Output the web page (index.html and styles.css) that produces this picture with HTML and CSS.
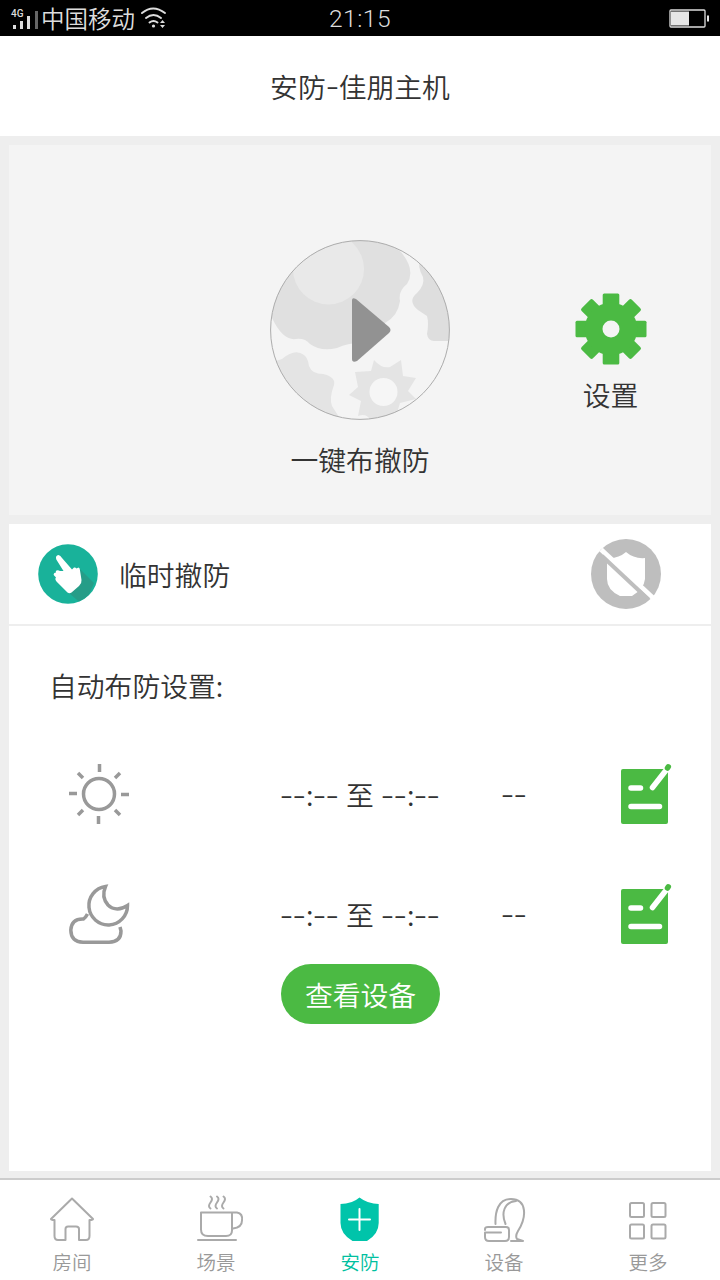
FILE: index.html
```html
<!DOCTYPE html>
<html lang="zh-CN">
<head>
<meta charset="utf-8">
<title>安防-佳朋主机</title>
<link rel="stylesheet" href="styles.css">
</head>
<body>
<div class="app">
  <div class="status">
    <div class="status-left">
      <svg class="signal" width="30" height="22" viewBox="0 0 30 22"><g fill="#ddd"><path d="M2 13h3v4H2zM9 9h3v8H9zM16 4h3v13h-3z"/><path d="M24 -1h3v18h-3z" fill="#666"/></g></svg>
      <span class="net">4G</span>
      <span class="carrier">中国移动</span>
      <svg width="26" height="22" viewBox="0 0 26 22" fill="none" stroke="#ddd" stroke-width="2" stroke-linecap="round"><path d="M1 5Q12-4 24 5M5 10Q12.500 4 20 10M8.500 14.500Q12.500 11.500 16.500 14.500"/><circle cx="12.500" cy="18" r="1.600" fill="#ddd" stroke="none"/><path d="M19 15l2.500-3 2.500 3zM19 17l2.500 3 2.500-3z" fill="#ddd" stroke="none"/></svg>
    </div>
    <span class="clock">21:15</span>
    <svg class="battery" width="41" height="20" viewBox="0 0 41 20"><rect x="2" y="1" width="35" height="17" rx="1" fill="none" stroke="#ddd" stroke-width="1.300"/><path d="M3 2.500h18v14H3zM39 6.500h2v6h-2z" fill="#e6e6e6"/></svg>
  </div>
  <header class="header">安防<span class="hyphen">-</span>佳朋主机</header>
  <main class="content">
    <section class="hero">
      <div class="toggle">
        <svg width="180" height="180" viewBox="0 0 180 180">
          <defs><clipPath id="disc"><circle cx="90" cy="90" r="89.500"/></clipPath></defs>
          <g clip-path="url(#disc)">
            <rect width="180" height="180" fill="#f4f4f4"/>
            <path d="M0 0H115L131 12Q146 30 137 44Q128 51 130 61Q128 76 115 83L90 103Q78 103 67 108Q51 112 40 104Q35 98 26 99Q13 101 2 78Z" fill="#e0e0e0"/>
            <circle cx="58.500" cy="29" r="35.500" fill="#e9e9e9"/>
            <path d="M180 20H150Q147 26 153 37Q155 45 147 53Q137 61 148 70L157 76Q159 83 157 94Q158 101 164 101H180Z" fill="#dedede"/>
            <path d="M0 123L12 119Q25 108 34 115Q38 118 39 126Q42 134 53 134Q66 137 64 145Q59 158 62 166L71 180H0Z" fill="#e4e4e4"/>
            <path d="M104 120Q112 129 120 127L131 120L133 136L146 138L138 151L146 159L130 163L125 180H100Q97 173 88 176L91 161L79 155L88 147L85 132L101 131Z" fill="#e4e4e4"/>
            <circle cx="113.500" cy="152" r="14" fill="#f6f6f6"/>
          </g>
          <circle cx="90" cy="90" r="89.400" fill="none" stroke="#acacac"/>
          <path d="M82 60Q82 57 86 59L119 87Q122 90 119 93L87 121Q82 123 82 119Z" fill="#929292"/>
        </svg>
        <span class="caption">一键布撤防</span>
      </div>
      <div class="settings">
        <svg width="72" height="72" viewBox="0 0 72 72" fill="#4bba43">
          <defs><path id="tooth" d="M27.700 15V2Q27.700 .500 29.200 .500H42.800Q44.300 .500 44.300 2V15Z"/><path id="corner" d="M28 15V2.500Q28 .500 30 .500H42Q44 .500 44 2.500V15Z"/></defs>
          <use href="#tooth"/><use href="#corner" transform="rotate(45 36 36)"/><use href="#tooth" transform="rotate(90 36 36)"/><use href="#corner" transform="rotate(135 36 36)"/><use href="#tooth" transform="rotate(180 36 36)"/><use href="#corner" transform="rotate(225 36 36)"/><use href="#tooth" transform="rotate(270 36 36)"/><use href="#corner" transform="rotate(315 36 36)"/>
          <circle cx="36" cy="36" r="26.300"/><circle cx="36" cy="36" r="8.500" fill="#f4f4f4"/>
        </svg>
        <span>设置</span>
      </div>
    </section>
    <section class="panel">
      <div class="disarm">
        <svg width="60" height="60" viewBox="0 0 60 60">
          <defs><clipPath id="hand"><circle cx="30" cy="30" r="29.500"/></clipPath></defs>
          <circle cx="30" cy="30" r="29.800" fill="#19b29a"/>
          <path d="M42 25L56 39L46 62L31 49L43 36Z" fill="#269d88" clip-path="url(#hand)"/>
          <path d="M18.300 15.500Q17 11.500 20.500 11Q22.500 11.500 24 14L34 25.500L36 23.500Q37.500 23 38.500 24.500L40.500 23.500Q42 24 42 26.500L43.500 36Q44 39 41 42L33.500 48.500Q31.500 50 29.500 48.500L18.500 37.500Q16.500 35 18 33.500L15.700 31Q15.500 28.500 18 28.500L17.800 27Q19.500 25.500 22 27L25.500 27Z" fill="#fff"/>
        </svg>
        <span class="disarm-label">临时撤防</span>
        <svg width="72" height="72" viewBox="0 0 72 72"><circle cx="36" cy="36" r="35" fill="#bebebe"/><path d="M17 20Q28 21 36 14Q44 21 55 20V41Q54 51 42 58H30Q17 52 17 41Z" fill="#fff"/><path d="M11 11.500L63 60" stroke="#fff" stroke-width="5"/><path d="M12 18L58.500 61.500" stroke="#bebebe" stroke-width="4"/></svg>
      </div>
      <div class="schedule">
        <h2 class="heading">自动布防设置:</h2>
        <div class="row">
          <svg width="60" height="60" viewBox="0 0 60 60" fill="none" stroke="#999" stroke-width="3.500"><circle cx="30" cy="30" r="15.500"/><path d="M30.500 0v8M29.500 52v8M0 29.500h8M52 30.500h8M9 9l5 5M51 9l-5 5M9 51l5-5M51 51l-5-5"/></svg>
          <div class="time"><span class="dashes">--</span><span class="colon">:</span><span class="dashes">--</span><span class="to">至</span><span class="dashes">--</span><span class="colon">:</span><span class="dashes">--</span></div>
          <div class="days"><span class="dashes">--</span></div>
          <svg class="edit" width="52" height="60" viewBox="0 0 52 60"><rect x="1" y="5" width="47" height="55" rx="2" fill="#4bba43"/><path d="M11 24h9.500M11 42.500h28.500" stroke="#fff" stroke-width="5.500" stroke-linecap="round"/><path d="M32.500 23.500L47 5" stroke="#fff" stroke-width="5.500" stroke-linecap="round"/><path d="M48.300 2.800L47.500 4" stroke="#4bba43" stroke-width="5.500" stroke-linecap="round"/></svg>
        </div>
        <div class="row">
          <svg width="60" height="60" viewBox="0 0 60 60" fill="none" stroke="#999" stroke-width="3.500"><path d="M36.500 2.500A19.300 19.300 0 1 0 58.500 21.500C50 27 43 25 39 21Q32 13 36.500 2.500Z"/><path d="M18.500 30Q17 33 14.500 35Q2.500 34.500 1.800 46Q2 58 14 58.200H40Q52 58 52 47L51 43"/></svg>
          <div class="time"><span class="dashes">--</span><span class="colon">:</span><span class="dashes">--</span><span class="to">至</span><span class="dashes">--</span><span class="colon">:</span><span class="dashes">--</span></div>
          <div class="days"><span class="dashes">--</span></div>
          <svg class="edit" width="52" height="60" viewBox="0 0 52 60"><rect x="1" y="5" width="47" height="55" rx="2" fill="#4bba43"/><path d="M11 24h9.500M11 42.500h28.500" stroke="#fff" stroke-width="5.500" stroke-linecap="round"/><path d="M32.500 23.500L47 5" stroke="#fff" stroke-width="5.500" stroke-linecap="round"/><path d="M48.300 2.800L47.500 4" stroke="#4bba43" stroke-width="5.500" stroke-linecap="round"/></svg>
        </div>
        <button class="view">查看设备</button>
      </div>
    </section>
  </main>
  <nav class="tabs">
    <a class="tab"><svg width="48" height="48" viewBox="0 0 48 48"><path d="M24 3.500L45 24Q45 25 41.500 25V41Q41.500 45 38 45H31V34Q31 31.500 28 31.500H20Q17.500 31.500 17.500 34V45H10Q6.500 45 6.500 41V25Q3 25 3 24Z"/></svg><span>房间</span></a>
    <a class="tab"><svg width="48" height="48" viewBox="0 0 48 48"><path d="M9 17.500H40V35.500Q40 41 34 41H16Q9 41 9 34.500ZM40 17.500H45Q51 18.500 50 25.500Q50 32.500 41 33.500M6 45H44M18.500 1.500q3 2 0 6t0 6M25 1.500q3 2 0 6t0 6M31.500 1.500q3 2 0 6t0 6"/></svg><span>场景</span></a>
    <a class="tab active"><svg width="48" height="48" viewBox="0 0 48 48"><path class="shield" d="M23.500 2.500Q32 9 42.700 9V28Q42.700 39 31 46H16.500Q4.500 39 4.500 28V9Q16 9 23.500 2.500Z"/><path class="plus" d="M23.500 14v21M13 24.500h21"/></svg><span>安防</span></a>
    <a class="tab"><svg width="48" height="48" viewBox="0 0 48 48"><path d="M15.500 29C15 17 18 4 31 4C47 4 47 22 38 36Q35 41 37 44M37 44L43 46M25.500 29C21 18 24 7 36 6M5 35V34Q5 32 8 32H26Q29 32 29 35V42Q29 46 25 46H9Q5 46 5 42V37.500H21M31 46H43"/></svg><span>设备</span></a>
    <a class="tab"><svg width="48" height="48" viewBox="0 0 48 48"><rect x="6" y="8" width="14" height="14" rx="1.500"/><rect x="27.500" y="8" width="14" height="14" rx="1.500"/><rect x="6" y="29.500" width="14" height="14" rx="1.500"/><rect x="27.500" y="29.500" width="14" height="14" rx="1.500"/></svg><span>更多</span></a>
  </nav>
</div>
</body>
</html>
```
FILE: styles.css
```css
* { box-sizing: border-box; }
body { margin: 0; background: #eee; color: #333; font: 350 27.8px/40px "Noto Sans CJK SC DemiLight", "Noto Sans CJK SC", sans-serif; }
svg { display: block; flex: none; overflow: visible; }
.app { width: 720px; height: 1280px; display: flex; flex-direction: column; }

.status { height: 36px; background: #000; color: #ddd; display: grid; grid-template-columns: 1fr auto 1fr; align-items: center; padding: 0 11px 0 11px; }
.status-left { position: relative; display: flex; align-items: center; height: 34px; }
.signal { margin-top: 9px; }
.net { position: absolute; left: 0; top: 6px; font: 500 10px/12px Roboto, sans-serif; }
.carrier { font-size: 23.5px; line-height: 32px; margin: -2px 6px 0 0; }
.clock { font: 300 24.5px/36px Roboto, sans-serif; letter-spacing: .5px; padding-top: 1px; }
.battery { justify-self: end; }

.header { height: 100px; background: #fff; text-align: center; line-height: 100px; flex: none; }
.hyphen { display: inline-block; width: 13px; text-align: left; transform: translateY(-2px) scaleX(1.35); transform-origin: left; line-height: 40px; }
.content { flex: 1; display: flex; flex-direction: column; gap: 9px; padding: 9px 9px 7px; }

.hero { height: 370px; background: #f4f4f4; display: grid; grid-template-columns: 1fr 180px 1fr; padding-top: 95px; flex: none; }
.toggle { grid-column: 2; display: flex; flex-direction: column; align-items: center; gap: 19px; }
.caption { white-space: nowrap; }
.settings { display: flex; flex-direction: column; align-items: center; padding: 53px 0 0 60px; gap: 9px; }

.panel { flex: 1; background: #fff; }
.disarm { height: 102px; border-bottom: 2px solid #eee; display: flex; align-items: center; padding: 0 49px 0 29px; }
.disarm-label { flex: 1; margin-left: 21px; }
.schedule { display: flex; flex-direction: column; align-items: flex-start; padding: 39px 39px 0 40px; }
.heading { margin: 0 0 59px; font: inherit; }
.row { width: 100%; height: 60px; display: grid; grid-template-columns: 211px 221px 1fr 52px; align-items: center; padding-left: 20px; margin-bottom: 60px; }
.time { display: flex; align-items: center; }
.dashes { display: inline-block; width: 26px; transform: translateY(-1px) scaleX(1.35); transform-origin: left; }
.days { padding-bottom: 2px; }
.colon { width: 7px; }
.to { width: 42px; text-align: center; }
.view { align-self: center; width: 159px; height: 60px; margin-top: -40px; border: 0; border-radius: 30px; background: #4bba43; color: #fff; font: inherit; padding: 0; }

.tabs { height: 102px; flex: none; border-top: 2px solid #ccc; background: #fff; display: grid; grid-template-columns: repeat(5, 1fr); }
.tab { display: flex; flex-direction: column; align-items: center; padding-top: 15px; font-size: 19.5px; line-height: 28px; color: #999; gap: 5px; }
.tab svg { fill: none; stroke: #aaa; stroke-width: 2; stroke-linecap: round; stroke-linejoin: round; }
.active { color: #00c0a0; }
.active .shield { fill: #00c4aa; stroke: none; }
.active .plus { stroke: #fff; }
```
